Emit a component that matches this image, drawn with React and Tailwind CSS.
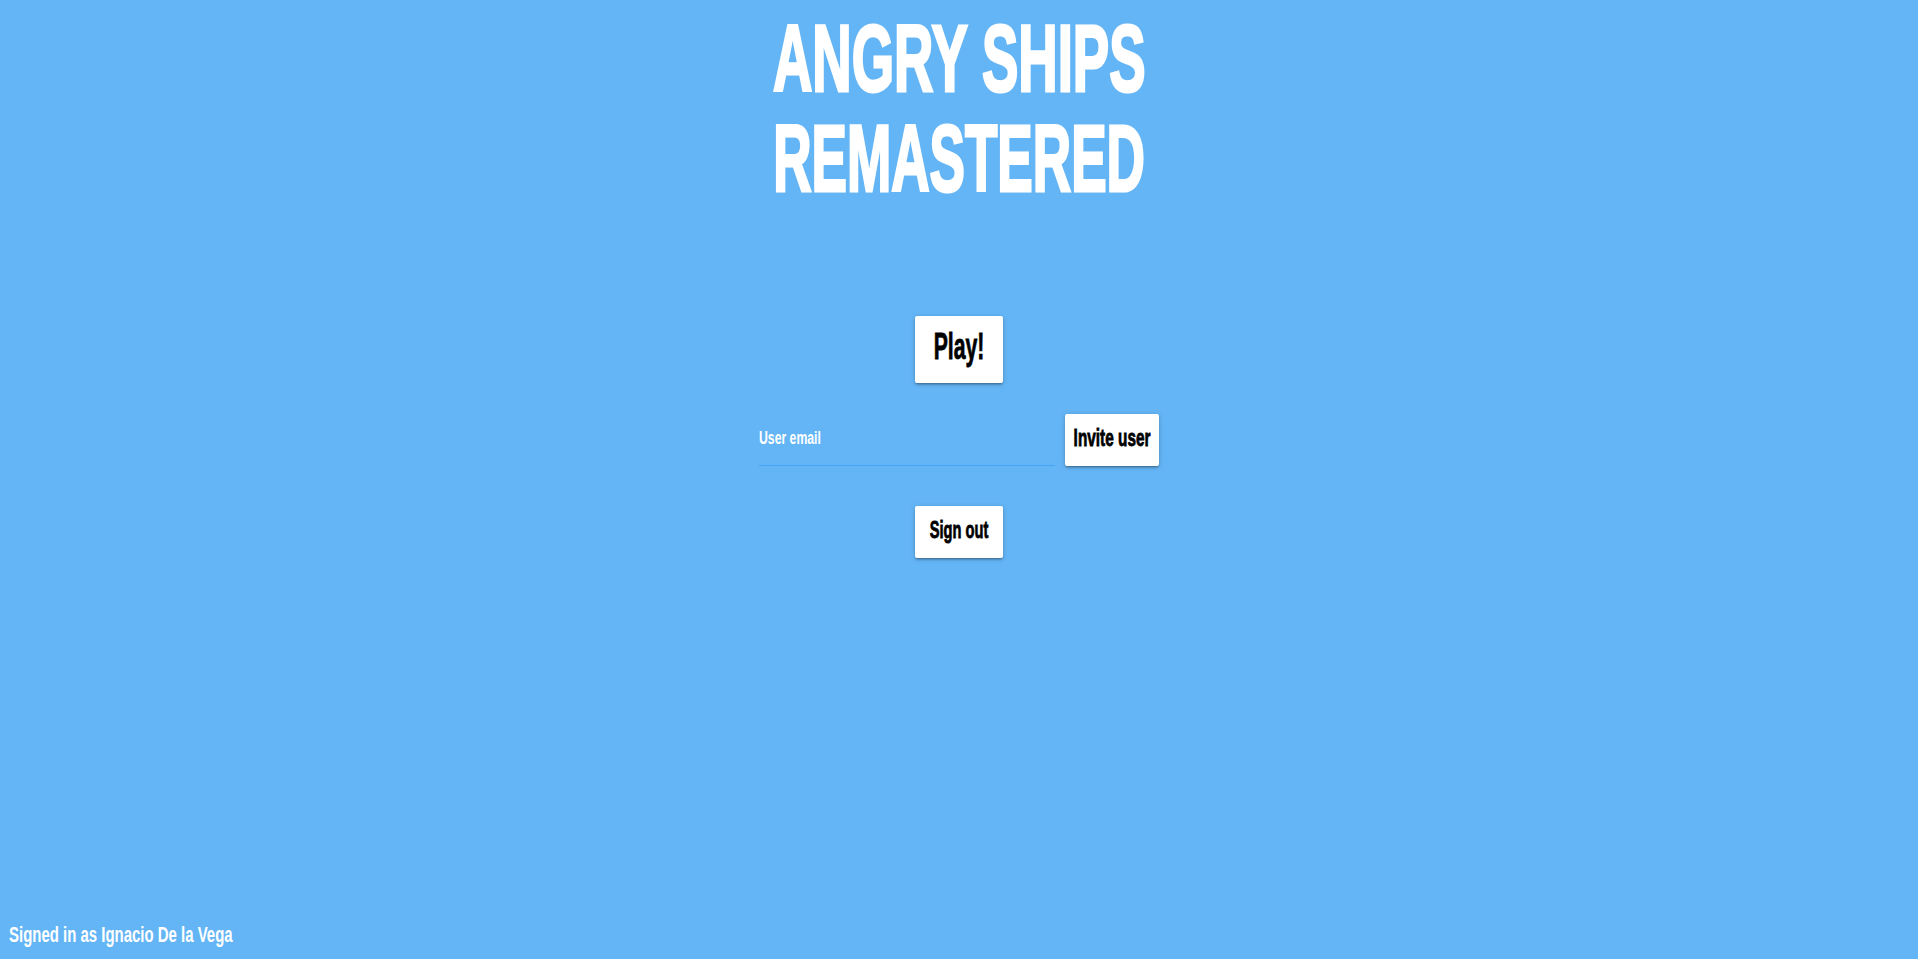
import React, { useState } from 'react';

const font = "font-['Liberation_Sans','Arial',sans-serif]";
const shadow = "shadow-[0_2px_2px_0_rgba(0,0,0,0.14),0_3px_1px_-2px_rgba(0,0,0,0.12),0_1px_5px_0_rgba(0,0,0,0.2)]";
const btn = `bg-white rounded-[2px] ${shadow} flex items-center justify-center pb-[5px] font-bold text-black whitespace-nowrap [-webkit-text-stroke:0.8px_black]`;

const App = () => {
    const [email, setEmail] = useState('');

    return (
        <div className={`h-screen w-full bg-[#64b5f6] flex flex-col items-center ${font}`}>
            {/* Title */}
            <h1 className="mt-[9px] text-center text-[94px] leading-[100px] font-bold text-white whitespace-nowrap [-webkit-text-stroke:3px_white]">
                <span className="inline-block scale-x-[0.58]">ANGRY SHIPS</span>
                <br />
                <span className="inline-block scale-x-[0.565]">REMASTERED</span>
            </h1>

            {/* Play */}
            <button className={`mt-[107px] w-[88px] h-[67px] text-[36px] ${btn}`}>
                <span className="inline-block scale-x-[0.59]">Play!</span>
            </button>

            {/* Invite */}
            <div className="mt-[31px] flex items-end gap-[10px]">
                <div className="relative w-[296px]">
                    {!email && (
                        <label
                            htmlFor="email"
                            className="absolute left-0 top-[7px] text-[18px] font-bold text-white origin-left scale-x-[0.68] pointer-events-none"
                        >
                            User email
                        </label>
                    )}
                    <input
                        id="email"
                        type="email"
                        value={email}
                        onChange={(e) => setEmail(e.target.value)}
                        className="w-full h-[48px] bg-transparent border-b border-[#42a5f5] outline-none text-[18px] text-white"
                    />
                </div>
                <button className={`w-[94px] h-[52px] text-[24px] ${btn}`}>
                    <span className="inline-block scale-x-[0.64]">Invite user</span>
                </button>
            </div>

            {/* Sign out */}
            <button className={`mt-[40px] w-[88px] h-[52px] text-[24px] ${btn}`}>
                <span className="inline-block scale-x-[0.61]">Sign out</span>
            </button>

            {/* Footer */}
            <div className="mt-auto self-start pl-[9px] pb-[13px] text-[22px] leading-[22px] font-bold text-white whitespace-nowrap">
                <span className="inline-block origin-left scale-x-[0.68]">Signed in as Ignacio De la Vega</span>
            </div>
        </div>
    );
};

export default App;
